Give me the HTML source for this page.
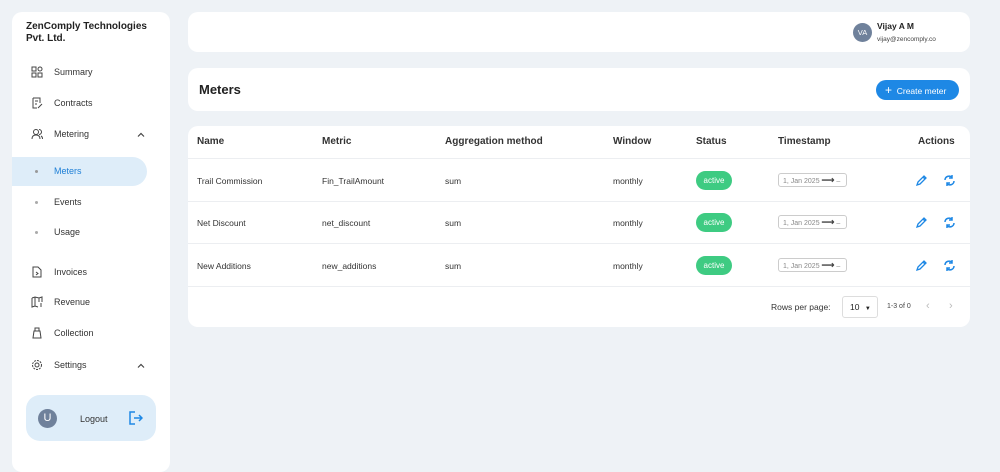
<!DOCTYPE html><html><head><style>
*{box-sizing:border-box;margin:0;padding:0}
body{width:1000px;height:456px;background:#eef2f6;font-family:"Liberation Sans",sans-serif;color:#222;position:relative;overflow:hidden;font-size:9px}
.card{position:absolute;background:#fff;border-radius:10px}
.nav{position:absolute;left:54px;font-size:9px;color:#333}
.ic{position:absolute;left:31px;width:12px;height:12px}
.th{position:absolute;top:136px;font-size:10px;font-weight:bold;color:#333}
.td{position:absolute;font-size:8.5px;color:#333}
.badge{position:absolute;left:696px;width:36px;height:19px;border-radius:10px;background:#3ecb82;color:#fff;font-size:8px;text-align:center;line-height:19px}
.ts{position:absolute;left:778px;width:69px;height:14px;border:1px solid #ccc;border-radius:3px;font-size:7px;color:#888;line-height:12px;padding-left:4px}
.ts b{color:#444;font-size:9px}
.sep{position:absolute;left:188px;width:782px;height:1px;background:#eceef1}
.chev{position:absolute;left:137px;width:8px;height:5px}
</style></head><body>
<div class="card" style="left:12px;top:12px;width:158px;height:460px"></div>
<div style="position:absolute;left:26px;top:21px;font-size:10px;font-weight:bold;line-height:12px;color:#222">ZenComply Technologies<br>Pvt. Ltd.</div>
<svg class="ic" style="top:66px" viewBox="0 0 12 12" fill="none" stroke="#444" stroke-width="1"><rect x="1" y="1" width="4" height="4"/><rect x="7" y="1" width="4" height="4" rx="2"/><rect x="1" y="7" width="4" height="4"/><rect x="7" y="7" width="4" height="4"/></svg>
<div class="nav" style="top:67px">Summary</div>
<svg class="ic" style="top:97px" viewBox="0 0 12 12" fill="none" stroke="#444" stroke-width="1"><path d="M2 1h7v5M2 1v10h4M4 4h3M4 7h2M7 11l4-4"/></svg>
<div class="nav" style="top:98px">Contracts</div>
<svg class="ic" style="top:128px" viewBox="0 0 12 12" fill="none" stroke="#444" stroke-width="1"><circle cx="5" cy="4" r="2.5"/><path d="M1 11c0-3 2-4 4-4s4 1 4 4M8 1.5a2.5 2.5 0 010 5M10 8c1 .5 1.5 1.5 1.5 3"/></svg>
<div class="nav" style="top:129px">Metering</div>
<svg class="chev" style="top:132px" viewBox="0 0 8 5" fill="none" stroke="#444" stroke-width="1.2"><path d="M1 4.5L4 1.5 7 4.5"/></svg>
<div style="position:absolute;left:12px;top:157px;width:135px;height:29px;background:#deedf9;border-radius:0 15px 15px 0"></div>
<div style="position:absolute;left:35px;top:170px;width:3px;height:3px;border-radius:2px;background:#999"></div>
<div class="nav" style="top:166px;color:#1e7fd6">Meters</div>
<div style="position:absolute;left:35px;top:201px;width:3px;height:3px;border-radius:2px;background:#aaa"></div>
<div class="nav" style="top:197px">Events</div>
<div style="position:absolute;left:35px;top:231px;width:3px;height:3px;border-radius:2px;background:#aaa"></div>
<div class="nav" style="top:227px">Usage</div>
<svg class="ic" style="top:266px" viewBox="0 0 12 12" fill="none" stroke="#444" stroke-width="1"><path d="M2 1h5l3 3v7H2zM5 6l2 1.5L5 9"/></svg>
<div class="nav" style="top:267px">Invoices</div>
<svg class="ic" style="top:296px" viewBox="0 0 12 12" fill="none" stroke="#444" stroke-width="1"><path d="M1 2l3-1 4 1 3-1v5M1 2v9l3-1 3 1M4 1v9M8 2v4M10 7v4"/></svg>
<div class="nav" style="top:297px">Revenue</div>
<svg class="ic" style="top:327px" viewBox="0 0 12 12" fill="none" stroke="#444" stroke-width="1"><path d="M4 1h4v3H4zM3 4h6l1 7H2z"/></svg>
<div class="nav" style="top:328px">Collection</div>
<svg class="ic" style="top:359px" viewBox="0 0 12 12" fill="none" stroke="#444" stroke-width="1"><circle cx="6" cy="6" r="2"/><circle cx="6" cy="6" r="4.5" stroke-dasharray="2 1"/></svg>
<div class="nav" style="top:360px">Settings</div>
<svg class="chev" style="top:363px" viewBox="0 0 8 5" fill="none" stroke="#444" stroke-width="1.2"><path d="M1 4.5L4 1.5 7 4.5"/></svg>
<div style="position:absolute;left:26px;top:395px;width:130px;height:46px;background:#deedf9;border-radius:14px"></div>
<div style="position:absolute;left:38px;top:409px;width:19px;height:19px;border-radius:10px;background:#6f819b;color:#fff;font-size:11px;text-align:center;line-height:19px">U</div>
<div style="position:absolute;left:80px;top:414px;font-size:9px;color:#333">Logout</div>
<svg style="position:absolute;left:129px;top:411px" width="14" height="14" viewBox="0 0 14 14" fill="none" stroke="#1e88e5" stroke-width="1.5"><path d="M6 1H1v12h5M5 7h8M10 4l3 3-3 3"/></svg>

<div class="card" style="left:188px;top:12px;width:782px;height:40px"></div>
<div style="position:absolute;left:853px;top:23px;width:19px;height:19px;border-radius:10px;background:#6f819b;color:#fff;font-size:7.5px;text-align:center;line-height:19px">VA</div>
<div style="position:absolute;left:877px;top:21px;font-size:8.5px;font-weight:bold">Vijay A M</div>
<div style="position:absolute;left:877px;top:36px;font-size:6.5px;color:#444">vijay@zencomply.co</div>

<div class="card" style="left:188px;top:68px;width:782px;height:43px"></div>
<div style="position:absolute;left:199px;top:82px;font-size:13px;font-weight:bold">Meters</div>
<div style="position:absolute;left:876px;top:80px;width:83px;height:20px;border-radius:10px;background:#1e88e5;color:#fff;font-size:8.5px;line-height:20px;padding-left:9px"><span style="font-size:12px">+</span>&nbsp;&nbsp;Create meter</div>

<div class="card" style="left:188px;top:126px;width:782px;height:201px"></div>
<div class="th" style="left:197px">Name</div><div class="th" style="left:322px">Metric</div><div class="th" style="left:445px">Aggregation method</div><div class="th" style="left:613px">Window</div><div class="th" style="left:696px">Status</div><div class="th" style="left:778px">Timestamp</div><div class="th" style="left:918px">Actions</div>
<div class="sep" style="top:158px"></div><div class="sep" style="top:201px"></div><div class="sep" style="top:243px"></div><div class="sep" style="top:286px"></div>

<div class="td" style="left:197px;top:176px">Trail Commission</div><div class="td" style="left:322px;top:176px">Fin_TrailAmount</div><div class="td" style="left:445px;top:176px">sum</div><div class="td" style="left:613px;top:176px">monthly</div>
<div class="badge" style="top:171px">active</div><div class="ts" style="top:173px">1, Jan 2025 <b>&#10230;</b> –</div>
<div class="td" style="left:197px;top:218px">Net Discount</div><div class="td" style="left:322px;top:218px">net_discount</div><div class="td" style="left:445px;top:218px">sum</div><div class="td" style="left:613px;top:218px">monthly</div>
<div class="badge" style="top:213px">active</div><div class="ts" style="top:215px">1, Jan 2025 <b>&#10230;</b> –</div>
<div class="td" style="left:197px;top:261px">New Additions</div><div class="td" style="left:322px;top:261px">new_additions</div><div class="td" style="left:445px;top:261px">sum</div><div class="td" style="left:613px;top:261px">monthly</div>
<div class="badge" style="top:256px">active</div><div class="ts" style="top:258px">1, Jan 2025 <b>&#10230;</b> –</div>

<svg width="0" height="0" style="position:absolute"><defs>
<g id="pen"><path d="M2 11l1-3 6-6 2 2-6 6z M8 3l2 2" fill="none" stroke="#1e88e5" stroke-width="1.3"/></g>
<g id="ref"><path d="M2 6a4 4 0 017-2.5M11 7a4 4 0 01-7 2.5" fill="none" stroke="#1e88e5" stroke-width="1.5"/><path d="M9 1v3h-3M4 12V9h3" fill="none" stroke="#1e88e5" stroke-width="1.5"/></g></defs></svg>
<svg style="position:absolute;left:915px;top:174px" width="13" height="13"><use href="#pen"/></svg>
<svg style="position:absolute;left:943px;top:174px" width="13" height="13"><use href="#ref"/></svg>
<svg style="position:absolute;left:915px;top:216px" width="13" height="13"><use href="#pen"/></svg>
<svg style="position:absolute;left:943px;top:216px" width="13" height="13"><use href="#ref"/></svg>
<svg style="position:absolute;left:915px;top:259px" width="13" height="13"><use href="#pen"/></svg>
<svg style="position:absolute;left:943px;top:259px" width="13" height="13"><use href="#ref"/></svg>

<div style="position:absolute;left:771px;top:302px;font-size:8.5px;color:#333">Rows per page:</div>
<div style="position:absolute;left:842px;top:296px;width:36px;height:22px;border:1px solid #ddd;border-radius:3px;font-size:8.5px;line-height:20px;padding-left:7px">10 <span style="font-size:6px;margin-left:3px">&#9660;</span></div>
<div style="position:absolute;left:887px;top:303px;font-size:7px;color:#444">1-3 of 0</div>
<div style="position:absolute;left:926px;top:300px;font-size:11px;color:#bbb">&#8249;</div>
<div style="position:absolute;left:949px;top:300px;font-size:11px;color:#bbb">&#8250;</div>
</body></html>
